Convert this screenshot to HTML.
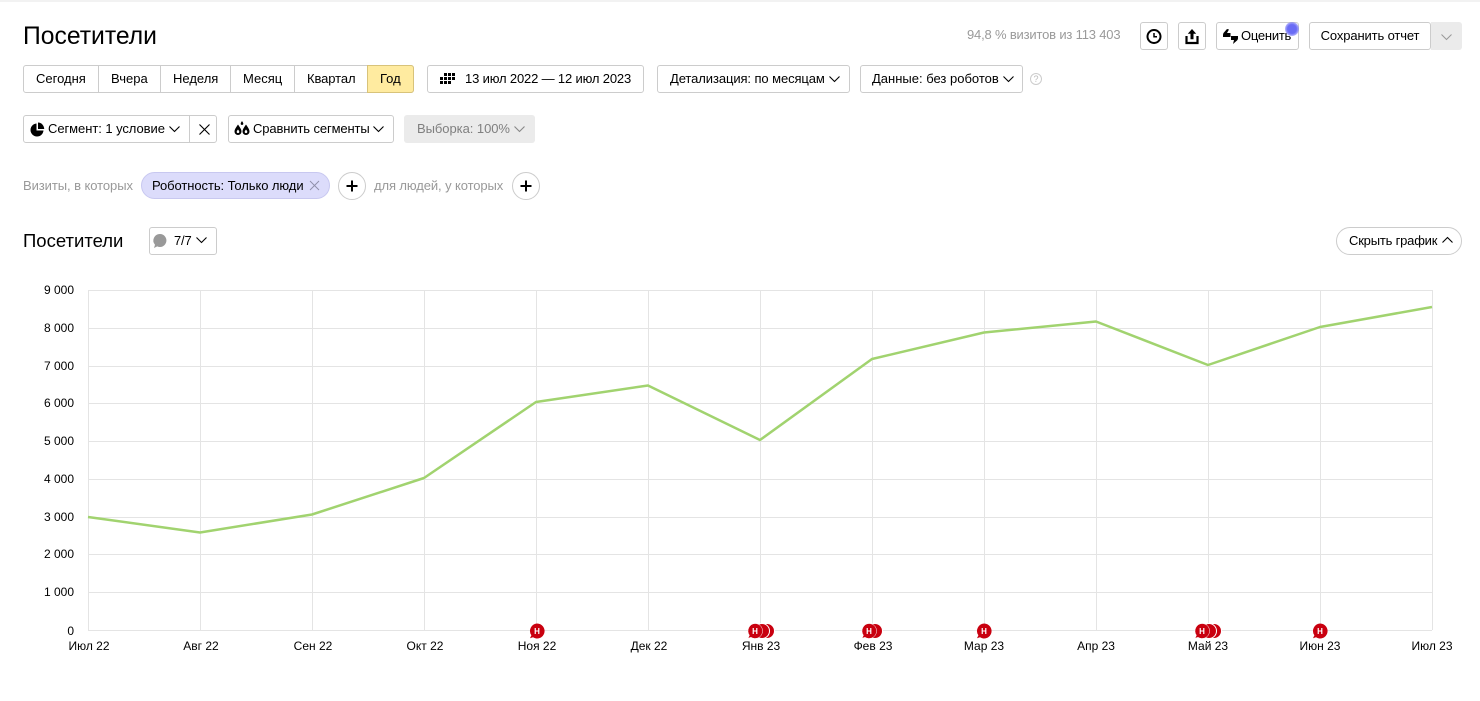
<!DOCTYPE html>
<html lang="ru"><head><meta charset="utf-8"><title>Посетители</title>
<style>
html,body{margin:0;padding:0;background:#fff;width:1480px;height:701px;overflow:hidden}
body{font-family:"Liberation Sans",sans-serif;color:#000;position:relative}
.a{position:absolute;white-space:nowrap}
.b{position:absolute;box-sizing:border-box;border:1px solid #ccc;border-radius:3px;background:#fff;height:28px;line-height:26px;font-size:13px;white-space:nowrap}
.t{position:absolute;font-size:13px;line-height:16px;white-space:nowrap}
.g{color:#999}
svg{position:absolute;overflow:visible}
</style></head><body>
<div class="a" style="left:0;top:0;width:1480px;height:2px;background:#f2f2f2"></div>
<div class="a" style="left:23px;top:23px;font-size:24.7px;line-height:28px">Посетители</div>

<div class="t g" style="left:967px;top:27px;font-size:13px;letter-spacing:-.18px;color:#9a9a9a">94,8 % визитов из 113 403</div>
<div class="b" style="left:1140px;top:22px;width:28px"></div>
<svg style="left:1146px;top:28px" width="16" height="16" viewBox="0 0 16 16"><circle cx="8" cy="8.500" r="6.500" fill="none" stroke="#000" stroke-width="2"/><path d="M8 5v3.700h3" fill="none" stroke="#000" stroke-width="1.500"/></svg>
<div class="b" style="left:1178px;top:22px;width:28px"></div>
<svg style="left:1184px;top:28px" width="16" height="17" viewBox="0 0 16 17"><path d="M8 1L3.800 5.800h2.700v5.400h3V5.800h2.700z" fill="#000"/><path d="M2.500 8v7h11V8" fill="none" stroke="#000" stroke-width="2.200"/></svg>
<div class="b" style="left:1216px;top:22px;width:83px"></div>
<svg style="left:1222px;top:28px" width="18" height="18" viewBox="0 0 18 18"><path d="M5 1L1.500 5Q1 6 1 7V9H8.500V5H5L7 1.500Z" fill="#000"/><path d="M9 8H16V10.500Q16 11.500 15 12.500L11 16L12 12H9Z" fill="#000"/></svg>
<div class="t" style="left:1241px;top:28px;letter-spacing:-.25px">Оценить</div>
<div class="a" style="left:1285px;top:22px;width:14px;height:14px;border-radius:50%;background:radial-gradient(circle,#6a6cf5 0 45%,rgba(130,130,250,.6) 70%,rgba(150,150,255,.35) 100%)"></div>
<div class="a" style="left:1431px;top:22px;width:31px;height:28px;background:#ebebeb;border-radius:0 3px 3px 0"></div>
<div class="b" style="left:1309px;top:22px;width:122px;text-align:center;letter-spacing:-.13px">Сохранить отчет</div>
<svg style="left:1440px;top:33px" width="13" height="8"><path d="M1.500 1.500l5 5 5-5" fill="none" stroke="#999" stroke-width="1"/></svg>

<div class="b" style="left:23px;top:65px;width:391px"></div>
<div class="a" style="left:367px;top:65px;width:47px;height:28px;box-sizing:border-box;background:#ffeba0;border:1px solid #d8c37a;border-radius:0 3px 3px 0"></div>
<div class="a" style="left:98px;top:66px;width:1px;height:26px;background:#ccc"></div>
<div class="a" style="left:160px;top:66px;width:1px;height:26px;background:#ccc"></div>
<div class="a" style="left:230px;top:66px;width:1px;height:26px;background:#ccc"></div>
<div class="a" style="left:294px;top:66px;width:1px;height:26px;background:#ccc"></div>
<div class="t" style="left:36px;top:71px">Сегодня</div>
<div class="t" style="left:111px;top:71px">Вчера</div>
<div class="t" style="left:173px;top:71px">Неделя</div>
<div class="t" style="left:243px;top:71px">Месяц</div>
<div class="t" style="left:307px;top:71px;letter-spacing:-.1px">Квартал</div>
<div class="t" style="left:380px;top:71px">Год</div>

<div class="b" style="left:427px;top:65px;width:217px"></div>
<svg style="left:439px;top:73px" width="16" height="12" fill="#000"><rect x="5" y="0" width="3" height="3"/><rect x="9" y="0" width="3" height="3"/><rect x="13" y="0" width="3" height="3"/><rect x="1" y="4" width="3" height="3"/><rect x="5" y="4" width="3" height="3"/><rect x="9" y="4" width="3" height="3"/><rect x="13" y="4" width="3" height="3"/><rect x="1" y="8" width="3" height="3"/><rect x="5" y="8" width="3" height="3"/><rect x="9" y="8" width="3" height="3"/></svg>
<div class="t" style="left:465px;top:71px;letter-spacing:-.16px">13 июл 2022 — 12 июл 2023</div>

<div class="b" style="left:657px;top:65px;width:193px"></div>
<div class="t" style="left:670px;top:71px;letter-spacing:-.09px">Детализация: по месяцам</div>
<svg style="left:828px;top:75px" width="13" height="8"><path d="M1.500 1.500l5 5 5-5" fill="none" stroke="#000" stroke-width="1.100"/></svg>
<div class="b" style="left:860px;top:65px;width:163px"></div>
<div class="t" style="left:872px;top:71px">Данные: без роботов</div>
<svg style="left:1002px;top:75px" width="13" height="8"><path d="M1.500 1.500l5 5 5-5" fill="none" stroke="#000" stroke-width="1.100"/></svg>
<div class="a" style="left:1030px;top:73px;width:12px;height:12px;box-sizing:border-box;border:1px solid #ccc;border-radius:50%;font-size:9px;line-height:10px;text-align:center;color:#bbb">?</div>

<div class="b" style="left:23px;top:115px;width:194px"></div>
<div class="a" style="left:189px;top:116px;width:1px;height:26px;background:#ccc"></div>
<svg style="left:30px;top:122px" width="15" height="15" viewBox="0 0 15 15"><path d="M6.500 1.500A6.500 6.500 0 1 0 13.500 8.500H6.500z" fill="#000"/><path d="M8 0.500A6.500 6.500 0 0 1 14.200 7H8z" fill="#000"/></svg>
<div class="t" style="left:48px;top:121px;letter-spacing:-.06px">Сегмент: 1 условие</div>
<svg style="left:168px;top:125px" width="13" height="8"><path d="M1.500 1.500l5 5 5-5" fill="none" stroke="#000" stroke-width="1.100"/></svg>
<svg style="left:198px;top:123px" width="13" height="13"><path d="M1.500 1.500l10 10M11.500 1.500l-10 10" fill="none" stroke="#000" stroke-width="1.100"/></svg>
<div class="b" style="left:228px;top:115px;width:166px"></div>
<svg style="left:234px;top:121px" width="16" height="15" viewBox="0 0 16 15"><path d="M4 3.500C2.500 6 .5 8 .5 10.500a3.500 3.500 0 0 0 7 0C7.500 8 5.500 6 4 3.500z M4 8.500c-.7 1-1.300 1.500-1.300 2.300a1.300 1.300 0 0 0 2.600 0c0-.8-.6-1.300-1.300-2.300z" fill="#000" fill-rule="evenodd"/><path d="M12 3.500C10.500 6 8.500 8 8.500 10.500a3.500 3.500 0 0 0 7 0C15.500 8 13.500 6 12 3.500z M12 8.500c-.7 1-1.300 1.500-1.300 2.300a1.300 1.300 0 0 0 2.600 0c0-.8-.6-1.300-1.300-2.300z" fill="#000" fill-rule="evenodd"/><path d="M8 0c-.6 1-1.300 1.800-1.300 2.600a1.300 1.300 0 0 0 2.600 0C9.300 1.800 8.600 1 8 0z" fill="#000"/></svg>
<div class="t" style="left:253px;top:121px;letter-spacing:-.12px">Сравнить сегменты</div>
<svg style="left:372px;top:125px" width="13" height="8"><path d="M1.500 1.500l5 5 5-5" fill="none" stroke="#000" stroke-width="1.100"/></svg>
<div class="a" style="left:404px;top:115px;width:131px;height:28px;background:#ebebeb;border-radius:3px"></div>
<div class="t" style="left:417px;top:121px;color:#7f7f7f;letter-spacing:-.05px">Выборка: 100%</div>
<svg style="left:513px;top:125px" width="13" height="8"><path d="M1.500 1.500l5 5 5-5" fill="none" stroke="#888" stroke-width="1.100"/></svg>

<div class="t" style="left:23px;top:178px;color:#999;letter-spacing:-.07px">Визиты, в которых</div>
<div class="a" style="left:141px;top:172px;width:189px;height:27px;box-sizing:border-box;background:#dcdcfb;border:1px solid #c8c8f0;border-radius:14px"></div>
<div class="t" style="left:152px;top:178px;letter-spacing:-.08px">Роботность: Только люди</div>
<svg style="left:309px;top:180px" width="11" height="11"><path d="M1 1l9 9M10 1l-9 9" fill="none" stroke="#8f8fa8" stroke-width=".9"/></svg>
<div class="a" style="left:338px;top:172px;width:28px;height:28px;box-sizing:border-box;border:1px solid #ccc;border-radius:50%;background:#fff"></div>
<svg style="left:346px;top:180px" width="12" height="12"><path d="M6 .5v11M.5 6h11" stroke="#000" stroke-width="2"/></svg>
<div class="t" style="left:374px;top:178px;color:#999;letter-spacing:-.1px">для людей, у которых</div>
<div class="a" style="left:512px;top:172px;width:28px;height:28px;box-sizing:border-box;border:1px solid #ccc;border-radius:50%;background:#fff"></div>
<svg style="left:520px;top:180px" width="12" height="12"><path d="M6 .5v11M.5 6h11" stroke="#000" stroke-width="2"/></svg>

<div class="a" style="left:23px;top:230px;font-size:18.500px;line-height:22px">Посетители</div>
<div class="b" style="left:149px;top:227px;width:68px"></div>
<svg style="left:153px;top:234px" width="14" height="15" viewBox="0 0 14 15"><path d="M7 0a6.500 6.500 0 1 1-2.800 12.400L1 14l1-3.200A6.500 6.500 0 0 1 7 0z" fill="#999"/></svg>
<div class="t" style="left:174px;top:233px;font-size:13px;letter-spacing:-.2px">7/7</div>
<svg style="left:195px;top:236px" width="13" height="8"><path d="M1.500 1.500l5 5 5-5" fill="none" stroke="#000" stroke-width="1.100"/></svg>
<div class="b" style="left:1336px;top:227px;width:126px;border-radius:14px"></div>
<div class="t" style="left:1349px;top:233px;letter-spacing:-.2px">Скрыть график</div>
<svg style="left:1441px;top:236px" width="13" height="8"><path d="M1.500 6.500l5-5 5 5" fill="none" stroke="#000" stroke-width="1.100"/></svg>

<svg style="left:0;top:0" width="1480" height="701" font-family="Liberation Sans, sans-serif" font-size="12">
<g stroke="#e4e4e4" stroke-width="1" fill="none" shape-rendering="crispEdges">
<path d="M88 290.500H1432M88 328.500H1432M88 366.500H1432M88 403.500H1432M88 441.500H1432M88 479.500H1432M88 517.500H1432M88 554.500H1432M88 592.500H1432M88 630.500H1432"/>
<path d="M88.500 290V630M200.500 290V630M312.500 290V630M424.500 290V630M536.500 290V630M648.500 290V630M760.500 290V630M872.500 290V630M984.500 290V630M1096.500 290V630M1208.500 290V630M1320.500 290V630M1432.500 290V630"/>
</g>
<polyline fill="none" stroke="#a1d36f" stroke-width="2.500" stroke-linejoin="round" points="88,517 200,532.500 312,514.500 424,478 536,402 648,385.500 760,440 872,359 984,332.500 1096,321.500 1208,365 1320,327 1432,307"/>
<g text-anchor="end" fill="#000">
<text x="74" y="294">9 000</text><text x="74" y="332">8 000</text><text x="74" y="370">7 000</text><text x="74" y="407">6 000</text><text x="74" y="445">5 000</text><text x="74" y="483">4 000</text><text x="74" y="521">3 000</text><text x="74" y="558">2 000</text><text x="74" y="596">1 000</text><text x="74" y="635">0</text>
</g>
<g text-anchor="middle" fill="#000">
<text x="89" y="650">Июл 22</text><text x="201" y="650">Авг 22</text><text x="313" y="650">Сен 22</text><text x="425" y="650">Окт 22</text><text x="537" y="650">Ноя 22</text><text x="649" y="650">Дек 22</text><text x="761" y="650">Янв 23</text><text x="873" y="650">Фев 23</text><text x="984" y="650">Мар 23</text><text x="1096" y="650">Апр 23</text><text x="1208" y="650">Май 23</text><text x="1320" y="650">Июн 23</text><text x="1432" y="650">Июл 23</text>
</g>
<g stroke="#fff" stroke-width="1" fill="#c9000f">
<circle cx="767" cy="631" r="7.500"/><circle cx="762" cy="631" r="7.500"/>
<circle cx="875" cy="631" r="7.500"/>
<circle cx="1214" cy="631" r="7.500"/><circle cx="1209" cy="631" r="7.500"/>
</g>
<g fill="#c9000f">
<path d="M537 623.500a7.500 7.500 0 1 1-4 13.800l-3 1 1.400-3A7.500 7.500 0 0 1 537 623.500z"/>
<path d="M755 623.500a7.500 7.500 0 1 1-4 13.800l-3 1 1.400-3A7.500 7.500 0 0 1 755 623.500z" stroke="#fff" stroke-width=".5"/>
<path d="M869 623.500a7.500 7.500 0 1 1-4 13.800l-3 1 1.400-3A7.500 7.500 0 0 1 869 623.500z" stroke="#fff" stroke-width=".5"/>
<path d="M984 623.500a7.500 7.500 0 1 1-4 13.800l-3 1 1.400-3A7.500 7.500 0 0 1 984 623.500z"/>
<path d="M1202 623.500a7.500 7.500 0 1 1-4 13.800l-3 1 1.400-3A7.500 7.500 0 0 1 1202 623.500z" stroke="#fff" stroke-width=".5"/>
<path d="M1320 623.500a7.500 7.500 0 1 1-4 13.800l-3 1 1.400-3A7.500 7.500 0 0 1 1320 623.500z"/>
</g>
<g fill="#fff" font-size="8" font-weight="bold" text-anchor="middle">
<text x="537" y="634">Н</text><text x="755" y="634">Н</text><text x="869" y="634">Н</text><text x="984" y="634">Н</text><text x="1202" y="634">Н</text><text x="1320" y="634">Н</text>
</g>
</svg>
</body></html>
